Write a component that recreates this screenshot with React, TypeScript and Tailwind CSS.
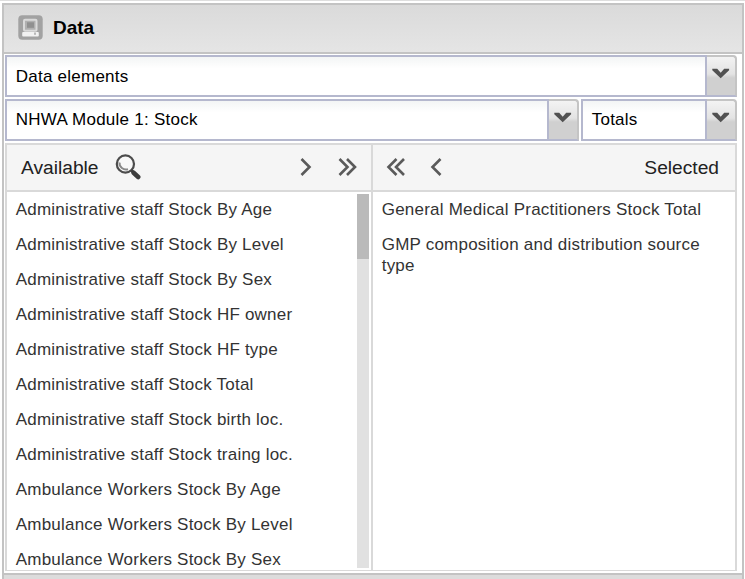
const available = [
  'Administrative staff Stock By Age',
  'Administrative staff Stock By Level',
  'Administrative staff Stock By Sex',
  'Administrative staff Stock HF owner',
  'Administrative staff Stock HF type',
  'Administrative staff Stock Total',
  'Administrative staff Stock birth loc.',
  'Administrative staff Stock traing loc.',
  'Ambulance Workers Stock By Age',
  'Ambulance Workers Stock By Level',
  'Ambulance Workers Stock By Sex',
];

const selected = [
  'General Medical Practitioners Stock Total',
  'GMP composition and distribution source type',
];

function Combo({ value, className, textClass = 'pt-[9px]' }: { value: string; className: string; textClass?: string }) {
  return (
    <div className={`flex h-[42px] ${className}`}>
      <div className={`min-w-0 flex-1 border-2 border-[#b5b8ce] bg-linear-to-b from-[#f3f5f5] to-white to-30% pl-[8.7px] text-[17px] leading-5 tracking-[0.25px] text-black ${textClass}`}>
        {value}
      </div>
      <div className="w-[30px] rounded-tr-[4px] border-t-2 border-r-2 border-b-2 border-t-[#c4c4c4] border-r-[#c4c4c4] border-b-[#b5b8ce] bg-linear-to-b from-[#f3f3f3] from-0% via-[#e3e3e3] via-45% to-[#d0d0d0] to-55%">
        <svg className="block" width="28" height="38" viewBox="0 0 28 38">
          <path d="M5.3 11.8h4.9l3.5 4 3.5-4h4.9v1.4l-8.4 8-8.4-8z" fill="#515151" />
        </svg>
      </div>
    </div>
  );
}

function Chevrons({ paths, width }: { paths: string; width: number }) {
  return (
    <svg className="mb-[2px] block" width={width} height="20" viewBox={`0 0 ${width} 20`} fill="none" stroke="#5a5a5a" strokeWidth="2.6">
      <path d={paths} />
    </svg>
  );
}

function SearchIcon() {
  return (
    <svg className="mb-[2px] block" width="26" height="26" viewBox="0 0 26 26" fill="none">
      <circle cx="10.4" cy="10" r="8.6" fill="#f8f8f8" stroke="#4c4c4c" strokeWidth="2.2" />
      <path d="M4.6 8.5c-.8 4.5 4 8 8.4 6.7" stroke="#888" strokeWidth="2" />
      <path d="M16 16l3 2.8" stroke="#444" strokeWidth="3" />
      <path d="M18.6 18.8l4.6 4.2" stroke="#3d3d3d" strokeWidth="4.6" strokeLinecap="round" />
    </svg>
  );
}

function DataIcon() {
  return (
    <svg className="mb-[3px] block" width="25" height="25" viewBox="0 0 25 25">
      <rect x="0.3" y="0.3" width="24.4" height="24.4" rx="4" fill="#a2a2a2" />
      <rect x="6" y="4.7" width="12.5" height="11" rx="1" fill="#b0b0b0" stroke="#dadada" strokeWidth="2" />
      <rect x="9" y="7.3" width="7" height="5.5" fill="#909090" />
      <rect x="4.2" y="17" width="16.6" height="4.4" rx="1" fill="#f2f2f2" />
      <rect x="16" y="17.5" width="2" height="2.3" fill="#b8b8b8" />
    </svg>
  );
}

function Items({ items }: { items: string[] }) {
  return (
    <ul className="flex flex-col gap-[14px] pt-[7px] text-[17px] leading-[21px] tracking-[0.22px] text-[#333]">
      {items.map((item) => (
        <li key={item}>{item}</li>
      ))}
    </ul>
  );
}

export default function App() {
  return (
    <main className="flex h-[579px] w-[745px] flex-col overflow-hidden border-t border-[#dedede] bg-white pt-[2px] pl-[2px] font-['Liberation_Sans',Arial,sans-serif]">
      <section className="flex h-[570px] w-[742px] shrink-0 flex-col border-x-2 border-t-2 border-[#c3c3c3]">
        <header className="flex h-[49px] shrink-0 items-center gap-[10px] border-b-2 border-[#c3c3c3] bg-linear-to-b from-[#dadada] to-[#e5e5e5] pl-[14px]">
          <DataIcon />
          <h1 className="text-[19px] font-bold text-black">Data</h1>
        </header>
        <div className="flex min-h-0 flex-1 flex-col gap-[2px] pt-px pr-[5px] pb-[2px] pl-px">
          <Combo value="Data elements" className="w-full shrink-0" textClass="pt-[10px]" />
          <div className="flex shrink-0 gap-[2px]">
            <Combo value="NHWA Module 1: Stock" className="w-[574px]" />
            <Combo value="Totals" className="w-[156px]" />
          </div>
          <div className="flex min-h-0 flex-1 border-x-2 border-t-2 border-b border-[#d9d9d9] text-[#333]">
            <div className="flex w-[366px] shrink-0 flex-col border-r-2 border-[#d9d9d9]">
              <div className="flex h-[47px] shrink-0 items-center border-b-2 border-[#d9d9d9] bg-[#f5f5f5] pr-[13px] pl-[14px]">
                <span className="text-[19.2px] leading-6 text-[#222]">Available</span>
                <span className="ml-[16px]"><SearchIcon /></span>
                <span className="mr-[26px] ml-auto"><Chevrons width={12} paths="M1.5 2l8 8-8 8" /></span>
                <Chevrons width={20} paths="M1.5 2l8 8-8 8M9 2l8 8-8 8" />
              </div>
              <div className="flex min-h-0 flex-1 justify-between overflow-hidden pr-[2px] pl-[8.7px]">
                <Items items={available} />
                <div className="mt-[2px] mb-[2px] w-3 bg-[#e1e1e1]">
                  <div className="h-[65px] bg-[#bababa]" />
                </div>
              </div>
            </div>
            <div className="flex min-w-0 flex-1 flex-col">
              <div className="flex h-[47px] shrink-0 items-center border-b-2 border-[#d9d9d9] bg-[#f5f5f5] pr-[16px] pl-[13px]">
                <Chevrons width={20} paths="M10.5 2l-8 8 8 8M18 2l-8 8 8 8" />
                <span className="ml-[24px]"><Chevrons width={12} paths="M10.5 2l-8 8 8 8" /></span>
                <span className="ml-auto text-[19.2px] leading-6 text-[#222]">Selected</span>
              </div>
              <div className="px-[8.7px]">
                <Items items={selected} />
              </div>
            </div>
          </div>
        </div>
      </section>
      <div className="h-2 w-[742px] shrink-0 border-x-2 border-t-2 border-[#c3c3c3] bg-[#dcdcdc]" />
    </main>
  );
}
